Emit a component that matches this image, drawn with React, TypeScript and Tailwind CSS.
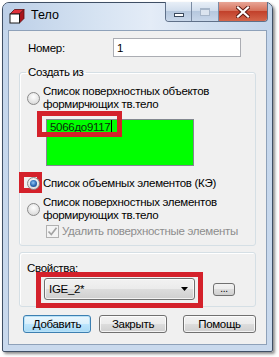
import React from "react";

function Radio({ checked = false }: { checked?: boolean }) {
  return (
    <div className="relative z-10 w-[13px] h-[13px] shrink-0 rounded-full border border-[#8a8a8a] bg-[radial-gradient(circle_at_50%_35%,#ffffff,#e6e6e6_55%,#cfcfcf)] flex items-center justify-center">
      {checked && (
        <div className="w-[7px] h-[7px] rounded-full bg-[radial-gradient(circle_at_45%_40%,#8cc6f7,#2866b0_55%,#0e3f7d)]" />
      )}
    </div>
  );
}

function Check() {
  return (
    <div className="w-[13px] h-[13px] shrink-0 border border-[#b1b1b1] bg-[#f4f4f4] flex items-center justify-center">
      <svg width="11" height="11" viewBox="0 0 11 11">
        <path d="M1.5 5.5 L4.3 8.5 L9.5 1.8" fill="none" stroke="#a3a3a3" strokeWidth="1.7" />
      </svg>
    </div>
  );
}

function Btn({ children, w, def = false }: { children: React.ReactNode; w: string; def?: boolean }) {
  return (
    <div
      className={
        def
          ? `${w} h-[18px] flex items-center justify-center rounded-[3px] border border-[#3c7fb1] bg-[linear-gradient(#eaf6fd,#d9f0fc_50%,#bee6fd_50%,#a7d9f5)] shadow-[inset_0_0_0_1px_#b8e2f8] leading-[14px]`
          : `${w} h-[18px] flex items-center justify-center rounded-[3px] border border-[#707070] bg-[linear-gradient(#f2f2f2,#ebebeb_50%,#dddddd_50%,#cfcfcf)] shadow-[inset_0_0_0_1px_rgba(255,255,255,0.75)] leading-[14px]`
      }
    >
      {children}
    </div>
  );
}

export default function App() {
  return (
    <div className="relative w-[279px] h-[357px] bg-white overflow-hidden pt-[2px] pl-[2px] font-['Liberation_Sans',Arial,sans-serif] text-[11.5px] tracking-[-0.3px] text-black">
      {/* window */}
      <div className="w-[271px] h-[350px] flex flex-col rounded-t-[7px] rounded-b-[2px] border border-[#3f4f65] bg-[linear-gradient(#c4d6ec,#c9d9ed)] shadow-[2px_2px_3px_rgba(0,0,0,0.45)]">
        {/* title bar */}
        <div className="h-[27px] flex items-start rounded-t-[6px] bg-[linear-gradient(to_right,#bccfe7,#d6e3f2_35%,#e4ecf7_55%,#d2e0f1_75%,#c2d4ea)]">
          <svg className="ml-[6px] mt-[5px]" width="16" height="16" viewBox="0 0 16 16">
            <path d="M1 6 L5.5 1.5 L15 1.5 L10.5 6 Z" fill="#e0303a" stroke="#5a1010" strokeWidth="0.8" />
            <path d="M10.5 6 L15 1.5 L15 10.5 L10.5 15 Z" fill="#a8141c" stroke="#5a1010" strokeWidth="0.8" />
            <rect x="1" y="6" width="9.5" height="9" fill="#ffffff" stroke="#1a1a1a" strokeWidth="1" />
          </svg>
          <div className="ml-[6px] mt-[5px] leading-[14px] text-[12.5px] tracking-normal">Тело</div>
          <div className="ml-auto mr-[4px] mt-[-1px] flex h-[20px] rounded-b-[4px] border border-t-0 border-[#5f7089] overflow-hidden">
            <div className="w-[26px] h-full flex items-end justify-center pb-[4px] border-r border-[#7a8ba3] bg-[linear-gradient(#e8eff7,#cfdcec_50%,#b6c8de_50%,#c8d7ea)]">
              <div className="w-[10px] h-[4px] bg-white border border-[#3b4a5e]" />
            </div>
            <div className="w-[27px] h-full flex items-center justify-center border-r border-[#7a8ba3] bg-[linear-gradient(#e8eff7,#cfdcec_50%,#b6c8de_50%,#c8d7ea)]">
              <div className="w-[10px] h-[8px] border border-[#a7b6c9] border-t-[2px] bg-[#dbe4ef]" />
            </div>
            <div className="w-[48px] h-full flex items-center justify-center bg-[linear-gradient(#e8a596,#d6725c_45%,#c2412b_50%,#d4664b)]">
              <svg width="14" height="12" viewBox="0 0 14 12">
                <path d="M2 1.5 L12 10.5 M12 1.5 L2 10.5" stroke="#5a1a12" strokeWidth="4" strokeLinecap="square" />
                <path d="M2 1.5 L12 10.5 M12 1.5 L2 10.5" stroke="#ffffff" strokeWidth="2.2" strokeLinecap="square" />
              </svg>
            </div>
          </div>
        </div>

        {/* client area */}
        <div className="ml-[5px] w-[259px] h-[315px] border border-[#8ea1b9] bg-[#f0f0f0] flex flex-col">
          {/* Номер row */}
          <div className="mt-[7px] h-[19px] flex items-center">
            <div className="w-[104px] pl-[19px] leading-[14px]">Номер:</div>
            <div className="w-[128px] h-[19px] border border-[#abadb3] bg-white pl-[3px] flex items-center leading-[14px]">1</div>
          </div>

          {/* Создать из */}
          <fieldset className="mt-[8px] ml-[10px] w-[237px] rounded-[3px] border border-[#d5dfe5] pb-[7px] shadow-[inset_1px_1px_0_#ffffff]">
            <legend className="ml-[6px] px-[2px] leading-[14px]">Создать из</legend>
            <div className="mt-[6px] pl-[7px] flex items-center gap-[3px]">
              <Radio />
              <div className="leading-[13px]">
                <div>Список поверхностных объектов</div>
                <div>формирчющих тв.тело</div>
              </div>
            </div>
            <div className="mt-[8px] ml-[26px] w-[148px] h-[47px] border border-[#828790] bg-[#00ff00] pl-[3px] flex items-start">
              <div className="leading-[14px] text-[#0c2a0c] flex">
                <span>5066до9117</span>
                <span className="ml-[1px] w-[1px] h-[13px] bg-black" />
              </div>
            </div>
            <div className="mt-[11px] pl-[7px] flex items-center gap-[3px]">
              <Radio checked />
              <div className="leading-[13px]">Список объемных элементов (КЭ)</div>
            </div>
            <div className="mt-[6px] pl-[7px] flex items-center gap-[3px]">
              <Radio />
              <div className="leading-[13px]">
                <div>Список поверхностных элементов</div>
                <div>формирующих тв.тело</div>
              </div>
            </div>
            <div className="mt-[3px] pl-[26px] flex items-center gap-[3px]">
              <Check />
              <div className="leading-[13px] text-[#8d8d8d] whitespace-nowrap">Удалить поверхностные элементы</div>
            </div>
          </fieldset>

          {/* Свойства */}
          <div className="mt-[6px] ml-[10px] w-[237px] rounded-[3px] border border-[#d5dfe5] pb-[6px] shadow-[inset_1px_1px_0_#ffffff]">
            <div className="mt-[8px] pl-[7px] leading-[14px]">Свойства:</div>
            <div className="mt-[3px] ml-[24px] flex items-center">
              <div className="w-[151px] h-[22px] rounded-[3px] border border-[#707070] bg-[linear-gradient(#f2f2f2,#ebebeb_50%,#dddddd_50%,#cfcfcf)] shadow-[inset_0_0_0_1px_rgba(255,255,255,0.75)] flex items-center pl-[4px] pr-[6px]">
                <span className="leading-[14px]">IGE_2*</span>
                <svg className="ml-auto" width="7" height="4" viewBox="0 0 7 4">
                  <path d="M0 0 L7 0 L3.5 4 Z" fill="#000" />
                </svg>
              </div>
              <div className="ml-[18px] w-[22px] h-[13px] rounded-[3px] border border-[#707070] bg-[linear-gradient(#f2f2f2,#ebebeb_50%,#dddddd_50%,#cfcfcf)] flex items-center justify-center text-[10px] leading-[10px]">
                ...
              </div>
            </div>
          </div>

          {/* buttons */}
          <div className="mt-[8px] ml-[14px] flex">
            <Btn w="w-[68px]" def>Добавить</Btn>
            <div className="ml-[8px]"><Btn w="w-[68px]">Закрыть</Btn></div>
            <div className="ml-[16px]"><Btn w="w-[73px]">Помощь</Btn></div>
          </div>
        </div>
      </div>

      {/* red highlight overlays */}
      <div className="absolute left-[37px] top-[111px] w-[85px] h-[26px] border-[5px] border-[#d4212b]" />
      <div className="absolute left-[19px] top-[172px] w-[23px] h-[21px] border-[5px] border-[#d4212b]" />
      <div className="absolute left-[36px] top-[272px] w-[167px] h-[36px] border-[5px] border-[#d4212b]" />
    </div>
  );
}
